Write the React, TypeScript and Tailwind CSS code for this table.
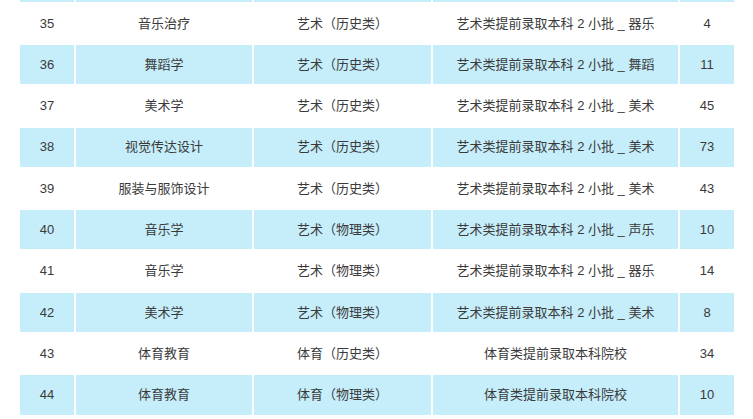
import React from "react";

const rows: [string, string, string, string, string][] = [
  ["35", "音乐治疗", "艺术（历史类）", "艺术类提前录取本科 2 小批 _ 器乐", "4"],
  ["36", "舞蹈学", "艺术（历史类）", "艺术类提前录取本科 2 小批 _ 舞蹈", "11"],
  ["37", "美术学", "艺术（历史类）", "艺术类提前录取本科 2 小批 _ 美术", "45"],
  ["38", "视觉传达设计", "艺术（历史类）", "艺术类提前录取本科 2 小批 _ 美术", "73"],
  ["39", "服装与服饰设计", "艺术（历史类）", "艺术类提前录取本科 2 小批 _ 美术", "43"],
  ["40", "音乐学", "艺术（物理类）", "艺术类提前录取本科 2 小批 _ 声乐", "10"],
  ["41", "音乐学", "艺术（物理类）", "艺术类提前录取本科 2 小批 _ 器乐", "14"],
  ["42", "美术学", "艺术（物理类）", "艺术类提前录取本科 2 小批 _ 美术", "8"],
  ["43", "体育教育", "体育（历史类）", "体育类提前录取本科院校", "34"],
  ["44", "体育教育", "体育（物理类）", "体育类提前录取本科院校", "10"],
];

export default function App() {
  return (
    <div
      className="w-[753px] h-[419px] overflow-hidden bg-white text-[13px] text-[#3a3a3a]"
      style={{ fontFamily: '"Liberation Sans", "Noto Sans CJK SC", sans-serif' }}
    >
      <div className="ml-[20px] w-[714px] flex flex-col gap-[2px]">
        <div className="grid grid-cols-[54px_176px_177px_245px_54px] gap-[2px] h-[1.7px]">
          <div className="bg-[#c6eefa]" />
          <div className="bg-[#c6eefa]" />
          <div className="bg-[#c6eefa]" />
          <div className="bg-[#c6eefa]" />
          <div className="bg-[#c6eefa]" />
        </div>
        {rows.map((r, i) => {
          const bg = i % 2 === 1 ? "bg-[#c6eefa]" : "bg-white";
          return (
            <div
              key={r[0]}
              className="grid grid-cols-[54px_176px_177px_245px_54px] gap-[2px] h-[39.3px]"
            >
              {r.map((c, j) => (
                <div key={j} className={`${bg} flex items-center justify-center`}>
                  {c}
                </div>
              ))}
            </div>
          );
        })}
      </div>
    </div>
  );
}
